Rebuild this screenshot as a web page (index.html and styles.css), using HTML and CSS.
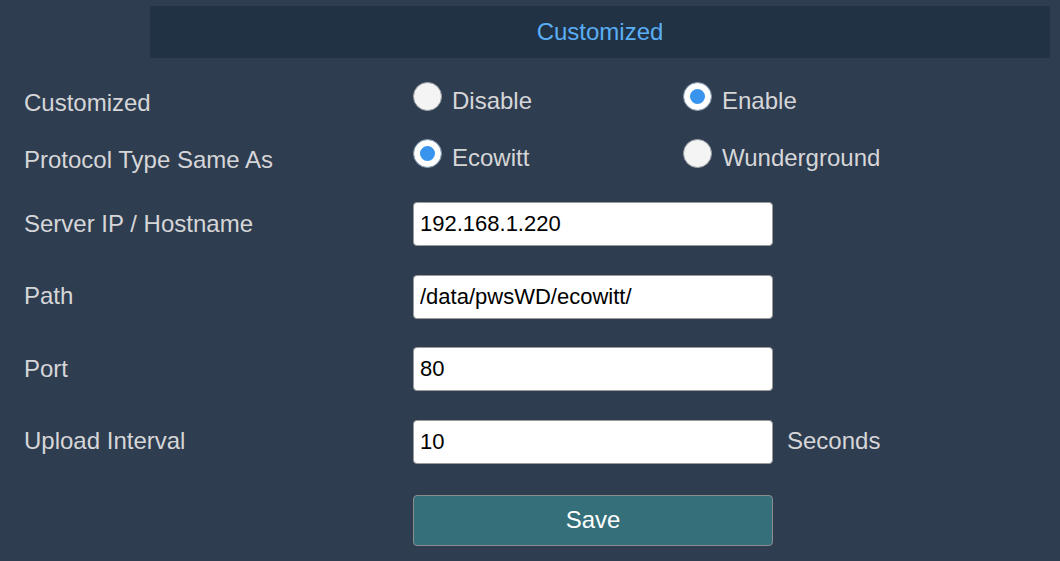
FILE: index.html
```html
<!DOCTYPE html>
<html lang="en">

<head>
  <title>Customized</title>
  <meta charset="utf-8">
  <meta name="viewport" content="width=device-width, initial-scale=1.0">
  <link rel="stylesheet" href="styles.css">
</head>

<body>
  <div class="container">
    <div class="title-bar">Customized</div>
    <div class="form">
      <div class="row radio-row">
        <label class="row-label">Customized</label>
        <div class="options">
          <label class="option"><input type="radio" name="custom"> Disable</label>
          <label class="option"><input type="radio" name="custom" checked> Enable</label>
        </div>
      </div>
      <div class="row radio-row">
        <label class="row-label">Protocol Type Same As</label>
        <div class="options">
          <label class="option"><input type="radio" name="proto" checked> Ecowitt</label>
          <label class="option"><input type="radio" name="proto"> Wunderground</label>
        </div>
      </div>
      <div class="row field-row first">
        <label class="row-label">Server IP / Hostname</label>
        <input type="text" id="server" value="192.168.1.220">
      </div>
      <div class="row field-row">
        <label class="row-label">Path</label>
        <input type="text" id="path" value="/data/pwsWD/ecowitt/">
      </div>
      <div class="row field-row">
        <label class="row-label">Port</label>
        <input type="text" id="port" value="80">
      </div>
      <div class="row field-row">
        <label class="row-label">Upload Interval</label>
        <input type="text" id="interval" value="10">
        <span class="unit">Seconds</span>
      </div>
      <div class="row save-row">
        <span class="row-label"></span>
        <button class="btn" id="save">Save</button>
      </div>
    </div>
  </div>
</body>

</html>
```

FILE: styles.css
```css
html,
body {
  height: 100%;
  padding: 0;
  margin: 0;
}

* {
  outline: none !important;
  box-sizing: border-box;
}

body {
  background: #2e3d50;
  color: #d6d6d8;
  font: 24px/1.2 "Liberation Sans", Arial, Helvetica, sans-serif;
  overflow: hidden;
}

input,
button {
  font: inherit;
}

.container {
  padding-top: 6px;
}

.title-bar {
  margin: 0 10px 0 150px;
  height: 52px;
  line-height: 52px;
  background: #213244;
  border-radius: 3px;
  color: #5aaef5;
  text-align: center;
}

.form {
  margin-top: 14px;
}

.row {
  display: flex;
  align-items: center;
  padding-left: 24px;
}

.row-label {
  width: 389px;
  flex-shrink: 0;
}

.radio-row {
  height: 57px;
}

.radio-row .row-label {
  padding-top: 6px;
}

.options {
  display: flex;
}

.option {
  display: flex;
  align-items: center;
  width: 270px;
  margin-top: 1px;
}

.option input {
  -webkit-appearance: none;
  appearance: none;
  width: 29px;
  height: 29px;
  margin: 0 10px 9px 0;
  border-radius: 50%;
  border: 1px solid #9a9ea4;
  background: #f4f4f4;
}

.option input:checked {
  background: #3994ee;
  border-color: #9a9ea4;
  box-shadow: inset 0 0 0 6px #fff;
}

.field-row {
  height: 44px;
  margin-bottom: 28.5px;
}

.field-row.first {
  margin-top: 16px;
}

.field-row input[type=text] {
  width: 360px;
  height: 44px;
  padding: 0 6px;
  font-size: 22px;
  color: #000;
  background: #fff;
  border: 1px solid #9a9a9a;
  border-radius: 4px;
}

.unit {
  margin-left: 14px;
}

.save-row {
  margin-top: 31px;
}

.btn {
  width: 360px;
  height: 51px;
  color: #fff;
  background: #35707a;
  border: 1px solid #8c8c8c;
  border-radius: 4px;
  cursor: pointer;
  padding: 0;
}
```
